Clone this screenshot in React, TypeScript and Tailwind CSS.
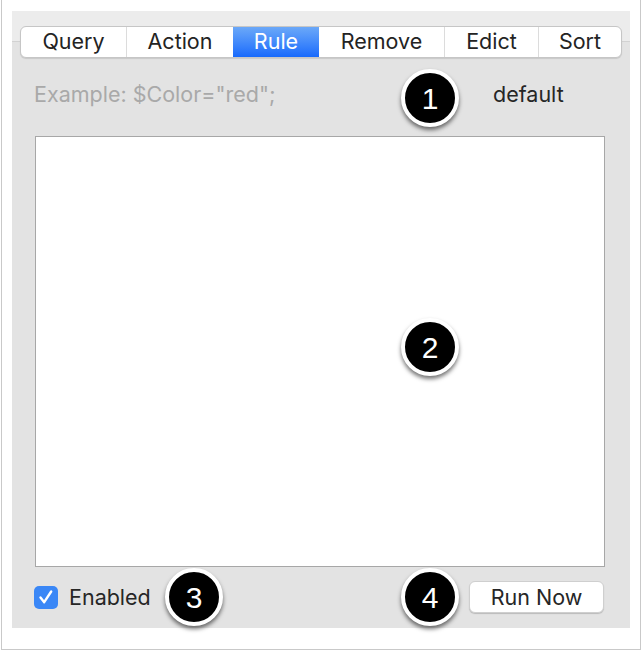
import React from "react";

const tabs = [
  { label: "Query", w: "w-[105px]" },
  { label: "Action", w: "w-[107px]" },
  { label: "Rule", w: "w-[86px]", active: true },
  { label: "Remove", w: "w-[125px]" },
  { label: "Edict", w: "w-[94px]" },
  { label: "Sort", w: "flex-1" },
];

function Badge({ n, className }: { n: string; className: string }) {
  return (
    <div
      className={`absolute w-[58px] h-[58px] rounded-full bg-black border-[4px] border-white shadow-[0_3px_4px_rgba(0,0,0,0.55)] flex items-center justify-center text-white text-[30px] leading-none font-['Liberation_Sans',sans-serif] ${className}`}
    >
      <span className="mt-[1px]">{n}</span>
    </div>
  );
}

export default function App() {
  return (
    <div className="relative w-[642px] h-[652px] bg-white font-['Inter',sans-serif]">
      <div className="ml-[1px] w-[640px] h-[650px] border-l border-r border-b border-[#c9c9c9] pt-[11px] pl-[10px]">
        <div className="w-[618px] h-[617px] bg-[#ececec] flex flex-col">
          <div className="relative z-10 mt-[15px] mx-[8px] -mb-[17px] h-[32px] flex bg-white border border-[#c6c6c6] rounded-[6px] shadow-[0_1px_1px_rgba(0,0,0,0.12)] overflow-hidden">
            {tabs.map((t, i) => (
              <div
                key={t.label}
                className={`${t.w} h-full flex items-center justify-center text-[21.5px] leading-none ${
                  t.active
                    ? "bg-gradient-to-b from-[#6ba8f8] to-[#1769fc] text-white"
                    : "text-[#232323]"
                } ${i > 0 && !t.active && !tabs[i - 1].active ? "border-l border-[#dcdcdc]" : ""}`}
              >
                {t.label}
              </div>
            ))}
          </div>
          <div className="flex-1 bg-[#e3e3e3] border-t border-[#d2d2d2] flex flex-col">
            <div className="mt-[32px] h-[40px] pl-[22px] flex items-center text-[21.5px]">
              <span className="w-[459px] text-[#a9a9a9]">Example: $Color="red";</span>
              <span className="text-[#262626]">default</span>
            </div>
            <div className="mt-[22px] ml-[23px] w-[570px] h-[431px] bg-white border border-[#a7a7a7]" />
            <div className="mt-[14px] h-[32px] pl-[22px] pr-[26px] flex items-center">
              <div className="w-[24px] h-[23px] rounded-[5px] bg-[#3a87f6] flex items-center justify-center">
                <svg width="20" height="20" viewBox="0 0 20 20">
                  <path d="M4.5 10.5 L8.2 15.2 L15.2 4.5" fill="none" stroke="white" strokeWidth="2.4" strokeLinecap="round" strokeLinejoin="round" />
                </svg>
              </div>
              <span className="ml-[11px] text-[21.5px] text-[#262626]">Enabled</span>
              <button className="ml-auto w-[135px] h-[32px] bg-white rounded-[6px] border border-[#cfcfcf] shadow-[0_1px_1px_rgba(0,0,0,0.18)] text-[21.5px] text-[#262626] flex items-center justify-center">
                Run Now
              </button>
            </div>
          </div>
        </div>
      </div>
      <Badge n="1" className="left-[401px] top-[69px]" />
      <Badge n="2" className="left-[401px] top-[318px]" />
      <Badge n="3" className="left-[165px] top-[568px]" />
      <Badge n="4" className="left-[401px] top-[568px]" />
    </div>
  );
}
